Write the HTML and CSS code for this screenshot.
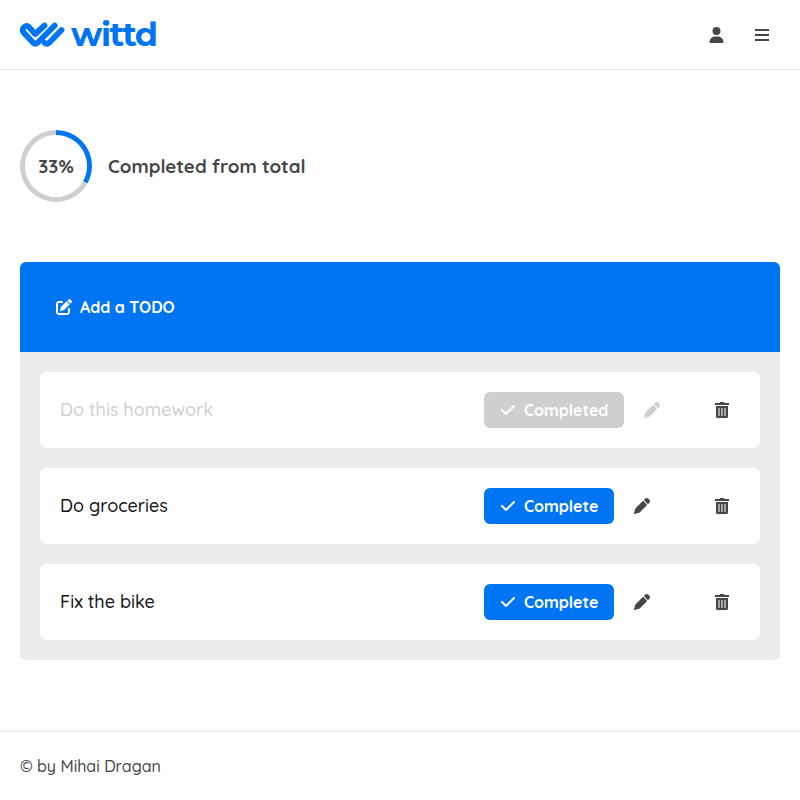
FILE: index.html
```html
<!DOCTYPE html>
<html lang="en">
<head>
<meta charset="utf-8">
<title>wittd</title>
<link rel="stylesheet" href="styles.css">
</head>
<body>
<svg class="sprite" aria-hidden="true">
  <symbol id="check" viewBox="0 0 448 512"><path d="M438.6 105.4c12.5 12.5 12.5 32.8 0 45.3l-256 256c-12.5 12.5-32.8 12.5-45.3 0l-128-128c-12.5-12.5-12.5-32.8 0-45.3s32.8-12.5 45.3 0L160 338.7 393.4 105.4c12.5-12.5 32.8-12.5 45.3 0z"/></symbol>
  <symbol id="pen" viewBox="0 0 512 512"><path d="M362.7 19.3L314.3 67.7 444.3 197.7l48.4-48.4c25-25 25-65.5 0-90.5L453.3 19.3c-25-25-65.5-25-90.5 0zm-71 71L58.6 323.5c-10.4 10.4-18 23.3-22.2 37.4L1 481.2C-1.5 489.7 .8 498.8 7 505s15.3 8.5 23.7 6.1l120.3-35.4c14.1-4.2 27-11.8 37.4-22.2L421.7 220.3 291.7 90.3z"/></symbol>
  <symbol id="trash" viewBox="0 0 14 16"><path fill-rule="evenodd" d="M4.3 1 5 .2Q5.2 0 5.5 0h3q.3 0 .5.2l.7.8h3.8q.5 0 .5.5V3H0V1.500Q0 1 .5 1zM1 4h12v10.500q0 1.500-1.500 1.500h-9Q1 16 1 14.500zM3.500 6v8h1V6zM6.500 6v8h1V6zM9.500 6v8h1V6z"/></symbol>
</svg>
<header class="header">
  <a class="logo">
    <svg class="logo-mark" viewBox="0 0 45 28"><g fill="none" stroke="currentColor" stroke-width="5.800" stroke-linecap="round" stroke-linejoin="round"><path d="M24.500 4.500 15.200 13 9.700 6.800Q7 3.500 4.200 6.100 1.500 9 4 12.100L13 21.600Q15.300 23.800 17.600 21.700L34.700 4.500"/><path d="M24.500 21.700Q27 23.800 29.200 21.700L41.500 9"/></g></svg>
    <span class="logo-text">wittd</span>
  </a>
  <nav class="nav">
    <svg class="user" viewBox="0 0 448 512"><path d="M224 256A128 128 0 1 0 224 0a128 128 0 1 0 0 256zm-45.700 48C79.800 304 0 383.800 0 482.300C0 498.700 13.300 512 29.700 512l388.600 0c16.400 0 29.700-13.300 29.700-29.700C448 383.800 368.200 304 269.700 304l-91.400 0z"/></svg>
    <svg class="menu" viewBox="0 0 14 12"><path d="M0 0h14v2H0zM0 5h14v2H0zM0 10h14v2H0z"/></svg>
  </nav>
</header>
<main class="main">
  <section class="progress">
    <div class="ring"><span class="percent">33%</span></div>
    <h2 class="caption">Completed from total</h2>
  </section>
  <section class="board">
    <div class="add">
      <svg class="icon" viewBox="0 0 512 512"><path d="M471.6 21.7c-21.9-21.9-57.3-21.9-79.2 0L362.3 51.7l97.9 97.9 30.1-30.1c21.9-21.9 21.9-57.3 0-79.2L471.6 21.7zm-299.2 220c-6.1 6.1-10.8 13.6-13.5 21.9l-29.6 88.8c-2.9 8.6-.6 18.1 5.8 24.6s15.9 8.7 24.6 5.8l88.8-29.6c8.2-2.7 15.7-7.4 21.9-13.5L437.7 172.3 339.7 74.3 172.4 241.7zM96 64C43 64 0 107 0 160V416c0 53 43 96 96 96H352c53 0 96-43 96-96V320c0-17.7-14.3-32-32-32s-32 14.3-32 32v96c0 17.7-14.3 32-32 32H96c-17.7 0-32-14.3-32-32V160c0-17.7 14.3-32 32-32h96c17.7 0 32-14.3 32-32s-14.3-32-32-32H96z"/></svg>
      <span class="add-text">Add a TODO</span>
    </div>
    <div class="list">
      <article class="todo done">
        <span class="title">Do this homework</span>
        <button class="btn"><svg class="icon"><use href="#check"/></svg><span>Completed</span></button>
        <svg class="icon edit"><use href="#pen"/></svg>
        <svg class="icon trash"><use href="#trash"/></svg>
      </article>
      <article class="todo">
        <span class="title">Do groceries</span>
        <button class="btn"><svg class="icon"><use href="#check"/></svg><span>Complete</span></button>
        <svg class="icon edit"><use href="#pen"/></svg>
        <svg class="icon trash"><use href="#trash"/></svg>
      </article>
      <article class="todo">
        <span class="title">Fix the bike</span>
        <button class="btn"><svg class="icon"><use href="#check"/></svg><span>Complete</span></button>
        <svg class="icon edit"><use href="#pen"/></svg>
        <svg class="icon trash"><use href="#trash"/></svg>
      </article>
    </div>
  </section>
</main>
<footer class="footer"><span>© by Mihai Dragan</span></footer>
</body>
</html>
```
FILE: styles.css
```css
* { box-sizing: border-box; }
body { margin: 0; height: 800px; display: flex; flex-direction: column; font-family: Quicksand, Lato, sans-serif; font-size: 16px; font-weight: 500; color: #444648; background: #fff; }
svg { fill: currentColor; display: block; flex: none; }
.sprite { position: absolute; width: 0; height: 0; }
.icon { width: 16px; height: 16px; }
.header { height: 70px; flex: none; padding: 0 31px 0 20px; display: flex; align-items: center; justify-content: space-between; border-bottom: 1px solid #e4e4e5; }
.logo { display: flex; align-items: center; color: #0075f3; }
.logo-mark { width: 45px; height: 28px; }
.logo-text { margin: 0 0 1px 6px; font: 700 33.500px/40px Montserrat, Poppins, Quicksand, Lato, sans-serif; letter-spacing: -1.500px; }
.nav { display: flex; align-items: center; gap: 31px; }
.user { width: 15px; height: 16px; }
.menu { width: 14px; height: 12px; }
.main { flex: 1; padding: 60px 20px 0; }
.progress { display: flex; align-items: center; gap: 16px; height: 72px; margin-bottom: 60px; }
.ring { width: 72px; height: 72px; border-radius: 50%; display: grid; place-items: center; background: radial-gradient(circle, #fff 30.500px, transparent 31.500px), conic-gradient(#0075f3 33%, #cecfd0 0); }
.percent { font-size: 18.72px; font-weight: 700; }
.caption { margin: 0; font-size: 18.72px; line-height: 24px; font-weight: 700; }
.board { border-radius: 6px; overflow: hidden; background: #ededed; }
.add { height: 90px; padding-left: 36px; display: flex; align-items: center; gap: 8px; background: #0075f3; color: #fff; font-weight: 700; }
.list { padding: 20px; display: grid; gap: 20px; }
.todo { height: 76px; padding: 0 31px 0 20px; border-radius: 6px; background: #fff; display: flex; align-items: center; }
.title { width: 424px; font-size: 18px; line-height: 22px; color: #111; white-space: nowrap; }
.btn { width: 130px; height: 36px; padding: 0 0 0 16px; border: 0; border-radius: 6px; display: flex; align-items: center; gap: 8px; background: #0075f3; color: #fff; font: 700 16px/20px Quicksand, Lato, sans-serif; }
.edit { margin-left: 20px; }
.trash { width: 14px; margin-left: auto; }
.done .title, .done .edit { color: #cecfd0; }
.done .btn { width: 140px; background: #cecfd0; }
.footer { height: 69px; flex: none; padding-left: 20px; display: flex; align-items: center; border-top: 1px solid #e4e4e5; }
```
